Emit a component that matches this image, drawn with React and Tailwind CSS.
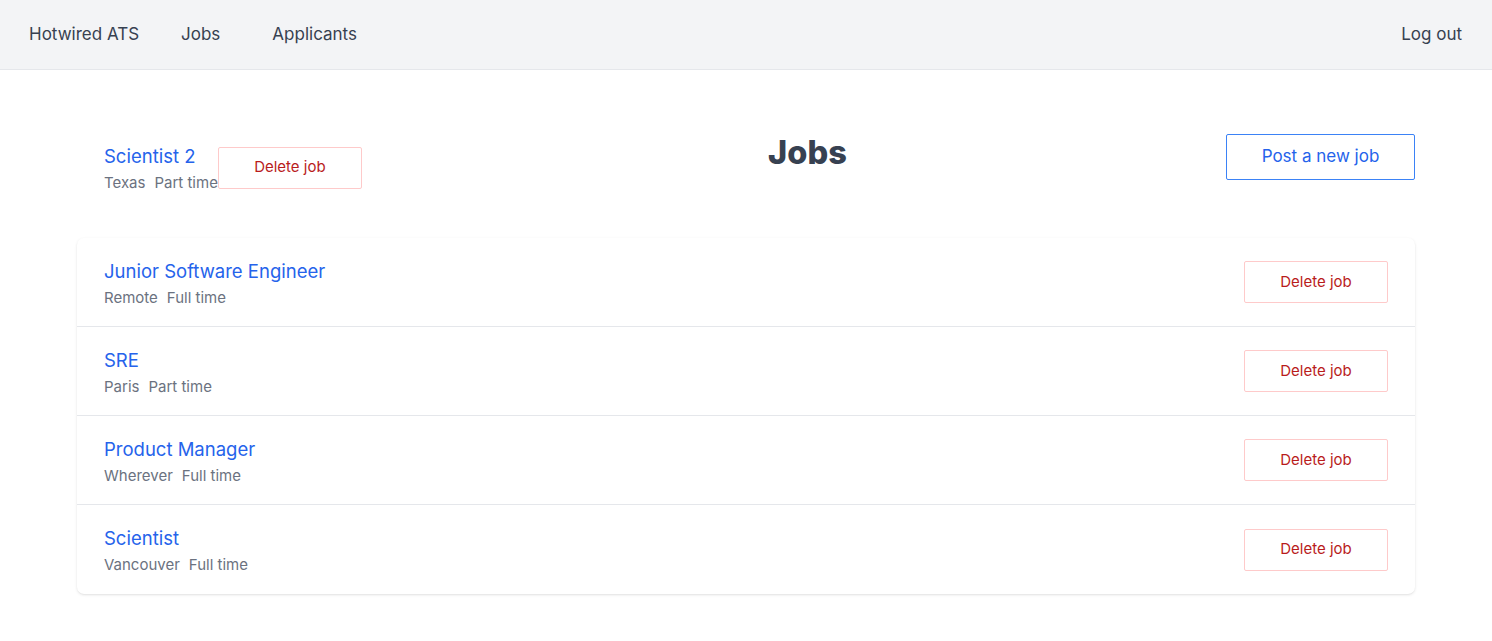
import React from "react";

const jobs = [
  { title: "Junior Software Engineer", location: "Remote", type: "Full time" },
  { title: "SRE", location: "Paris", type: "Part time" },
  { title: "Product Manager", location: "Wherever", type: "Full time" },
  { title: "Scientist", location: "Vancouver", type: "Full time" },
];

function DeleteButton() {
  return (
    <button className="h-[42px] w-[144px] shrink-0 border border-[#fecaca] rounded-[2px] text-[15px] text-[#b91c1c] bg-white">
      Delete job
    </button>
  );
}

function JobInfo({ title, location, type }) {
  return (
    <div className="flex flex-col">
      <a className="text-[18.5px] leading-[31px] text-[#2563eb]">{title}</a>
      <div className="flex gap-[9px] text-[15px] leading-[22px] text-[#6b7280]">
        <span>{location}</span>
        <span>{type}</span>
      </div>
    </div>
  );
}

export default function App() {
  return (
    <div className="min-h-[641px] bg-white" style={{ fontFamily: "Inter, 'Noto Sans', sans-serif" }}>
      <nav className="h-[70px] bg-[#f3f4f6] border-b border-[#e5e7eb] flex items-center justify-between text-[17px] text-[#374151]">
        <div className="flex items-center">
          <a className="pl-[29px] pr-[16px]">Hotwired ATS</a>
          <a className="px-[26px]">Jobs</a>
          <a className="px-[26px]">Applicants</a>
        </div>
        <a className="pr-[30px]">Log out</a>
      </nav>
      <main className="px-[77px] pt-[54px]">
        <div className="flex justify-between items-start">
          <div className="flex items-center px-[27px] py-[17px]">
            <JobInfo title="Scientist 2" location="Texas" type="Part time" />
            <DeleteButton />
          </div>
          <h1 className="mt-[9px] text-[32.5px] leading-[40px] font-extrabold text-[#374151]">Jobs</h1>
          <button className="mt-[10px] h-[46px] w-[189px] border border-[#3b82f6] rounded-[2px] text-[17px] text-[#2563eb] bg-white">
            Post a new job
          </button>
        </div>
        <div className="mt-[27px] rounded-[7px] bg-white shadow-[0_1px_3px_rgba(0,0,0,0.1),0_1px_2px_-1px_rgba(0,0,0,0.1)]">
          {jobs.map((job, i) => (
            <div
              key={job.title}
              className={`flex items-center justify-between px-[27px] h-[89px] ${i < jobs.length - 1 ? "border-b border-[#e5e7eb]" : ""}`}
            >
              <JobInfo {...job} />
              <DeleteButton />
            </div>
          ))}
        </div>
      </main>
    </div>
  );
}
